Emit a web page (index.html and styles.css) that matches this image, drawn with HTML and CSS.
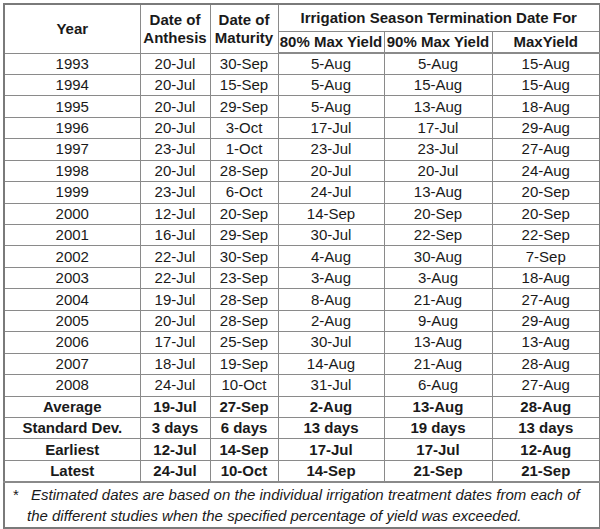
FILE: index.html
```html
<!DOCTYPE html>
<html>
<head>
<meta charset="utf-8">
<link rel="stylesheet" href="styles.css">
</head>
<body>
<table class="tbl">
  <colgroup>
    <col class="c-year"><col class="c-anth"><col class="c-mat"><col class="c-80"><col class="c-90"><col class="c-max">
  </colgroup>
  <thead>
    <tr class="h1">
      <th rowspan="2">Year</th>
      <th rowspan="2">Date of<br>Anthesis</th>
      <th rowspan="2">Date of<br>Maturity</th>
      <th colspan="3">Irrigation Season Termination Date For</th>
    </tr>
    <tr class="h2">
      <th>80% Max Yield</th>
      <th>90% Max Yield</th>
      <th>MaxYield</th>
    </tr>
  </thead>
  <tbody>
    <tr><td>1993</td><td>20-Jul</td><td>30-Sep</td><td>5-Aug</td><td>5-Aug</td><td>15-Aug</td></tr>
    <tr><td>1994</td><td>20-Jul</td><td>15-Sep</td><td>5-Aug</td><td>15-Aug</td><td>15-Aug</td></tr>
    <tr><td>1995</td><td>20-Jul</td><td>29-Sep</td><td>5-Aug</td><td>13-Aug</td><td>18-Aug</td></tr>
    <tr><td>1996</td><td>20-Jul</td><td>3-Oct</td><td>17-Jul</td><td>17-Jul</td><td>29-Aug</td></tr>
    <tr><td>1997</td><td>23-Jul</td><td>1-Oct</td><td>23-Jul</td><td>23-Jul</td><td>27-Aug</td></tr>
    <tr><td>1998</td><td>20-Jul</td><td>28-Sep</td><td>20-Jul</td><td>20-Jul</td><td>24-Aug</td></tr>
    <tr><td>1999</td><td>23-Jul</td><td>6-Oct</td><td>24-Jul</td><td>13-Aug</td><td>20-Sep</td></tr>
    <tr><td>2000</td><td>12-Jul</td><td>20-Sep</td><td>14-Sep</td><td>20-Sep</td><td>20-Sep</td></tr>
    <tr><td>2001</td><td>16-Jul</td><td>29-Sep</td><td>30-Jul</td><td>22-Sep</td><td>22-Sep</td></tr>
    <tr><td>2002</td><td>22-Jul</td><td>30-Sep</td><td>4-Aug</td><td>30-Aug</td><td>7-Sep</td></tr>
    <tr><td>2003</td><td>22-Jul</td><td>23-Sep</td><td>3-Aug</td><td>3-Aug</td><td>18-Aug</td></tr>
    <tr><td>2004</td><td>19-Jul</td><td>28-Sep</td><td>8-Aug</td><td>21-Aug</td><td>27-Aug</td></tr>
    <tr><td>2005</td><td>20-Jul</td><td>28-Sep</td><td>2-Aug</td><td>9-Aug</td><td>29-Aug</td></tr>
    <tr><td>2006</td><td>17-Jul</td><td>25-Sep</td><td>30-Jul</td><td>13-Aug</td><td>13-Aug</td></tr>
    <tr><td>2007</td><td>18-Jul</td><td>19-Sep</td><td>14-Aug</td><td>21-Aug</td><td>28-Aug</td></tr>
    <tr><td>2008</td><td>24-Jul</td><td>10-Oct</td><td>31-Jul</td><td>6-Aug</td><td>27-Aug</td></tr>
    <tr class="stat"><td>Average</td><td>19-Jul</td><td>27-Sep</td><td>2-Aug</td><td>13-Aug</td><td>28-Aug</td></tr>
    <tr class="stat"><td>Standard Dev.</td><td>3 days</td><td>6 days</td><td>13 days</td><td>19 days</td><td>13 days</td></tr>
    <tr class="stat"><td>Earliest</td><td>12-Jul</td><td>14-Sep</td><td>17-Jul</td><td>17-Jul</td><td>12-Aug</td></tr>
    <tr class="stat"><td>Latest</td><td>24-Jul</td><td>10-Oct</td><td>14-Sep</td><td>21-Sep</td><td>21-Sep</td></tr>
  </tbody>
  <tfoot>
    <tr class="note">
      <td colspan="6"><p class="note-text"><span class="star">*</span>Estimated dates are based on the individual irrigation treatment dates from each of the different studies when the specified percentage of yield was exceeded.</p></td>
    </tr>
  </tfoot>
</table>
</body>
</html>
```

FILE: styles.css
```css
html, body {
  margin: 0;
  padding: 0;
  background: #ffffff;
}
body {
  padding: 3px 0 0 3px;
  font-family: "Liberation Sans", Arial, sans-serif;
  color: #1a1a1a;
}
.tbl {
  border-collapse: collapse;
  table-layout: fixed;
  width: 596px;
  font-size: 15px;
  border: 2px solid #7a7a7a;
}
.c-year { width: 136px; }
.c-anth { width: 70px; }
.c-mat { width: 68px; }
.c-80 { width: 106px; }
.c-90 { width: 108px; }
.c-max { width: 108px; }
.tbl th, .tbl td {
  border: 1px solid #8a8a8a;
  padding: 0;
  text-align: center;
  vertical-align: middle;
  white-space: nowrap;
}
.tbl th {
  font-weight: bold;
  line-height: 18px;
}
.h1 { height: 27px; }
.h2 { height: 22px; }
thead tr.h2 th { border-bottom: 2px solid #8a8a8a; }
.tbl tbody tr { height: 21.45px; }
.tbl tbody td { line-height: 16px; }
.stat td { font-weight: bold; }
.note { height: 46px; }
.note td {
  text-align: left;
  white-space: normal;
  border-top: 2px solid #8a8a8a;
}
.note-text {
  margin: 0;
  padding: 0 6px 0 22px;
  text-indent: -14px;
  font-style: italic;
  line-height: 21px;
}
.star {
  display: inline-block;
  width: 18px;
  text-indent: 0;
  font-style: normal;
}
```
